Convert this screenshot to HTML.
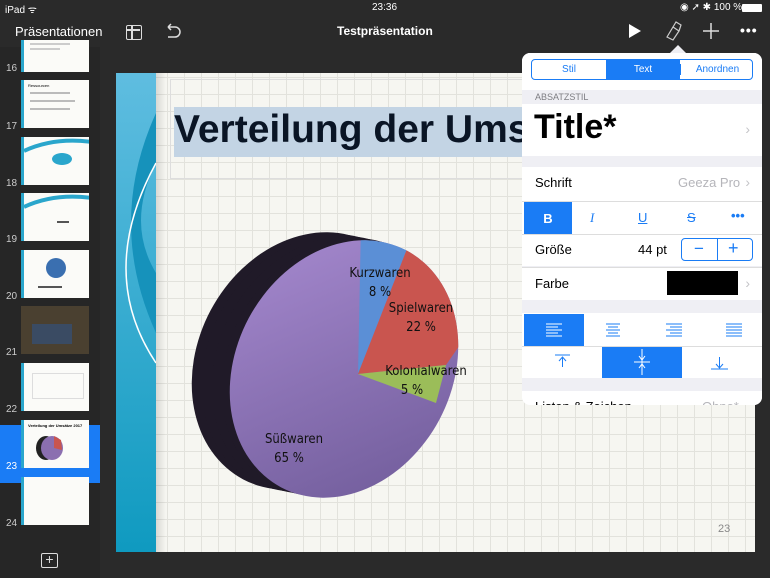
<!DOCTYPE html>
<html><head><meta charset="utf-8"><style>
*{margin:0;padding:0;box-sizing:border-box}
body{width:770px;height:578px;overflow:hidden;background:#2a2a2a;font-family:"Liberation Sans",sans-serif;position:relative}
.abs{position:absolute}
.status{top:0;left:0;width:770px;height:16px;color:#fff;font-size:10px}
.tb{color:#fff;font-size:13px}
.side{left:0;top:47px;width:100px;height:531px;background:#262626}
.th{position:absolute;left:21px;width:68px;height:48px;background:#fbfbf8;border-left:3px solid #2aa6cc;overflow:hidden}
.num{position:absolute;left:6px;color:#ccc;font-size:10px}
.slide{left:116px;top:73px;width:639px;height:479px;background-color:#f6f6f1;
background-image:linear-gradient(#e2e2dc 1px,transparent 1px),linear-gradient(90deg,#e2e2dc 1px,transparent 1px);background-size:17px 17px;background-position:0 4px}
.pop{left:522px;top:53px;width:240px;height:352px;background:#efeff4;border-radius:8px;overflow:hidden;font-size:13px;color:#000}
.row{position:absolute;left:0;width:240px;background:#fff}
.blue{color:#1a7cf5}
.chev{position:absolute;right:12px;color:#c4c4c8;font-size:14px}
</style></head><body>
<div class="abs status"><span class="abs" style="left:5px;top:2px">iPad ᯤ</span><span class="abs" style="left:372px;top:2px">23:36</span><span class="abs" style="left:680px;top:2px">◉ ➚ ✱ 100 %</span><span class="abs" style="left:742px;top:4px;width:20px;height:8px;background:#fff;border-radius:1px"></span></div>
<div class="abs tb" style="left:15px;top:24px">Präsentationen</div>
<div class="abs" style="left:126px;top:25px;width:16px;height:15px;border:1.5px solid #ddd;border-radius:2px"><div style="position:absolute;left:4px;top:0;width:1.5px;height:13px;background:#ddd"></div><div style="position:absolute;left:0;top:3px;width:13px;height:1.5px;background:#ddd"></div></div>
<svg class="abs" style="left:163px;top:23px" width="20" height="18"><path d="M5 4 H12 A5 5 0 0 1 12 14 H5 M5 4 L8 1 M5 4 L8 7" fill="none" stroke="#ddd" stroke-width="1.5"/></svg>
<div class="abs tb" style="left:337px;top:24px;font-weight:bold;font-size:12px">Testpräsentation</div>
<svg class="abs" style="left:628px;top:23px" width="14" height="16"><path d="M1 1 L13 8 L1 15Z" fill="#fff"/></svg>
<svg class="abs" style="left:664px;top:20px" width="20" height="22"><path d="M3 17 L9 7 L15 11 L9 20Z M9 7 L12 2 L17 5 L15 11" fill="none" stroke="#ccc" stroke-width="1.2"/></svg>
<svg class="abs" style="left:703px;top:23px" width="16" height="16"><path d="M8 0V16M0 8H16" stroke="#ddd" stroke-width="1.5"/></svg>
<div class="abs" style="left:740px;top:22px;color:#fff;font-size:14px;font-weight:bold;letter-spacing:1px">•••</div>

<div class="abs side">
<div class="abs" style="left:0;top:378px;width:100px;height:58px;background:#1a7cf5"></div>
</div>
<div class="th" style="top:40px;height:32px"><div style="margin:3px 6px;height:2px;width:40px;background:#ccc"></div><div style="margin:3px 6px;height:2px;width:30px;background:#ccc"></div></div><div class="num" style="top:63px">16</div>
<div class="th" style="top:80px"><div style="font-size:4px;margin:3px 4px">Ressourcen</div><div style="margin:4px 6px;height:2px;width:40px;background:#bbb"></div><div style="margin:6px 6px;height:2px;width:45px;background:#bbb"></div><div style="margin:6px 6px;height:2px;width:40px;background:#bbb"></div></div><div class="num" style="top:121px">17</div>
<div class="th" style="top:137px"><svg width="68" height="48"><path d="M0 14 Q30 0 68 5" stroke="#2aa6cc" stroke-width="4" fill="none"/><ellipse cx="38" cy="22" rx="10" ry="6" fill="#2aa6cc"/></svg></div><div class="num" style="top:178px">18</div>
<div class="th" style="top:193px"><svg width="68" height="48"><path d="M0 14 Q30 0 68 5" stroke="#2aa6cc" stroke-width="4" fill="none"/><rect x="33" y="28" width="12" height="2" fill="#555"/></svg></div><div class="num" style="top:234px">19</div>
<div class="th" style="top:250px"><svg width="68" height="48"><circle cx="32" cy="18" r="10" fill="#3a6fb0"/><rect x="14" y="36" width="24" height="2" fill="#555"/></svg></div><div class="num" style="top:291px">20</div>
<div class="th" style="top:306px;background:#4a4030;border-left-color:#4a4030"><div style="margin:18px 8px;height:20px;width:40px;background:#3a4b63"></div></div><div class="num" style="top:347px">21</div>
<div class="th" style="top:363px"><div style="margin:10px 8px;height:26px;width:52px;border:1px solid #ddd"></div></div><div class="num" style="top:404px">22</div>
<div class="th" style="top:420px"><div style="font-size:4px;font-weight:bold;margin:3px 4px">Verteilung der Umsätze 2017</div><svg width="68" height="40" style="position:absolute;top:8px;left:0"><ellipse cx="22" cy="20" rx="10" ry="12" fill="#222"/><ellipse cx="28" cy="20" rx="11" ry="12" fill="#8b6fb0"/><path d="M30 20 L30 8 L37 12 L38 22Z" fill="#c9554f"/></svg></div><div class="num" style="top:461px;color:#fff">23</div>
<div class="th" style="top:477px"></div><div class="num" style="top:518px">24</div>
<div class="abs" style="left:41px;top:553px;width:17px;height:15px;border:1.5px solid #ddd;border-radius:2px;color:#ddd;font-size:14px;line-height:11px;text-align:center">+</div>

<div class="abs slide">
<svg class="abs" style="left:0;top:0" width="40" height="479"><defs><linearGradient id="g" x1="0" y1="0" x2="0" y2="1"><stop offset="0" stop-color="#5fbde0"/><stop offset="1" stop-color="#0f9ac0"/></linearGradient></defs><rect width="40" height="479" fill="url(#g)"/><path d="M40 40 Q-10 150 40 260 L40 200 Q10 150 40 90Z" fill="#1692bb"/><path d="M40 90 Q-20 200 40 290" stroke="#fff" stroke-width="1.5" fill="none"/></svg>
<div class="abs" style="left:40px;top:0;width:10px;height:479px;background:linear-gradient(90deg,rgba(0,0,0,.12),transparent)"></div>
<div class="abs" style="left:54px;top:6px;width:420px;height:100px;border:1px solid #ddd"></div>
<div class="abs" style="left:58px;top:34px;width:410px;height:50px;background:#c3d4e4"></div>
<div class="abs" style="left:58px;top:35px;font-size:39px;font-weight:bold;color:#0a1525;white-space:nowrap">Verteilung der Ums</div>
<svg class="abs" style="left:0;top:0" width="420" height="479">
<defs><clipPath id="face"><ellipse cx="228" cy="296" rx="108" ry="134" transform="rotate(28 228 296)"/></clipPath>
<linearGradient id="pg" x1="0" y1="0" x2="1" y2="1"><stop offset="0" stop-color="#a78ad0"/><stop offset="1" stop-color="#6e5a98"/></linearGradient></defs>
<g fill="#201a28">
<ellipse cx="190" cy="288" rx="108" ry="134" transform="rotate(28 190 288)"/>
<ellipse cx="200" cy="290" rx="108" ry="134" transform="rotate(28 200 290)"/>
<ellipse cx="210" cy="292" rx="108" ry="134" transform="rotate(28 210 292)"/>
<ellipse cx="220" cy="294" rx="108" ry="134" transform="rotate(28 220 294)"/>
</g>
<ellipse cx="228" cy="296" rx="108" ry="134" transform="rotate(28 228 296)" fill="url(#pg)"/>
<g clip-path="url(#face)">
<path d="M242 301 L245 150 L298 158Z" fill="#5b8fd6"/>
<path d="M242 301 L298 158 L380 220 L330 292Z" fill="#c9554f"/>
<path d="M242 301 L330 292 L320 330Z" fill="#9bbd59"/>
</g>
<g font-family="DejaVu Sans,sans-serif" font-size="13" fill="#111" text-anchor="middle" font-stretch="condensed">
<text x="264" y="204">Kurzwaren</text><text x="264" y="223">8 %</text>
<text x="305" y="239">Spielwaren</text><text x="305" y="258">22 %</text>
<text x="310" y="302">Kolonialwaren</text><text x="296" y="321">5 %</text>
<text x="178" y="370">Süßwaren</text><text x="173" y="389">65 %</text>
</g></svg>
<div class="abs" style="left:602px;top:450px;font-size:11px;color:#888">23</div>
</div>

<svg class="abs" style="left:669px;top:45px" width="18" height="9"><path d="M0 9 L9 0 L18 9Z" fill="#efeff4"/></svg>
<div class="abs pop">
<div class="row" style="top:0;height:37px;background:#fff"></div>
<div class="abs" style="left:9px;top:6px;width:222px;height:21px;border:1px solid #1a7cf5;border-radius:4px;overflow:hidden;font-size:10px">
<div class="abs blue" style="left:0;width:74px;top:4px;text-align:center">Stil</div>
<div class="abs" style="left:74px;width:74px;height:21px;background:#1a7cf5;color:#fff;text-align:center;padding-top:4px">Text</div>
<div class="abs blue" style="left:148px;width:74px;top:4px;text-align:center;border-left:1px solid #1a7cf5">Anordnen</div></div>
<div class="abs" style="left:13px;top:39px;font-size:9px;color:#7d7d82">ABSATZSTIL</div>
<div class="row" style="top:51px;height:52px"><div class="abs" style="left:12px;top:4px;font-size:34px;font-weight:bold">Title*</div><div class="chev" style="top:17px">›</div></div>
<div class="row" style="top:114px;height:99px"></div>
<div class="abs" style="left:13px;top:122px">Schrift</div><div class="abs" style="left:156px;top:122px;color:#b5b5ba">Geeza Pro</div><div class="chev" style="top:121px">›</div>
<div class="abs" style="left:0;top:148px;width:240px;height:1px;background:#ddd"></div>
<div class="abs" style="left:2px;top:149px;width:48px;height:32px;background:#1a7cf5;color:#fff;font-weight:bold;text-align:center;padding-top:9px">B</div>
<div class="abs blue" style="left:68px;top:157px;font-style:italic;font-family:'Liberation Serif',serif">I</div>
<div class="abs blue" style="left:116px;top:157px;text-decoration:underline">U</div>
<div class="abs blue" style="left:165px;top:157px;text-decoration:line-through">S</div>
<div class="abs blue" style="left:209px;top:155px;font-weight:bold">•••</div>
<div class="abs" style="left:0;top:181px;width:240px;height:1px;background:#ddd"></div>
<div class="abs" style="left:13px;top:189px">Größe</div><div class="abs" style="left:116px;top:189px">44 pt</div>
<div class="abs" style="left:159px;top:185px;width:72px;height:23px;border:1px solid #1a7cf5;border-radius:4px"><div class="abs" style="left:35px;top:0;width:1px;height:21px;background:#1a7cf5"></div><div class="abs blue" style="left:12px;top:0;font-size:17px">−</div><div class="abs blue" style="left:46px;top:-1px;font-size:18px">+</div></div>
<div class="abs" style="left:0;top:214px;width:240px;height:1px;background:#ddd"></div>
<div class="row" style="top:215px;height:32px"></div>
<div class="abs" style="left:13px;top:223px">Farbe</div><div class="abs" style="left:145px;top:218px;width:71px;height:24px;background:#000"></div><div class="chev" style="top:222px">›</div>
<div class="row" style="top:260px;height:65px"></div>
<div class="abs" style="left:2px;top:261px;width:60px;height:32px;background:#1a7cf5"></div>
<svg class="abs" style="left:0;top:261px" width="240" height="65" stroke-width="1">
<g stroke="#fff"><path d="M24 10H40M24 13H36M24 16H40M24 19H36M24 22H40"/></g>
<g stroke="#1a7cf5"><path d="M84 10H98M86 13H96M84 16H98M86 19H96M84 22H98"/>
<path d="M144 10H160M148 13H160M144 16H160M148 19H160M144 22H160"/>
<path d="M204 10H220M204 13H220M204 16H220M204 19H220M204 22H220"/>
<path d="M33 41H48M40.5 44V53M37 47L40.5 43L44 47" fill="none"/>
<path d="M189 55H206M197.5 43V53M194 50L197.5 54L201 50" fill="none"/></g>
</svg>
<div class="abs" style="left:80px;top:293px;width:80px;height:32px;background:#1a7cf5"></div>
<svg class="abs" style="left:80px;top:293px" width="80" height="32"><path d="M32 16H48M40 3V29M37 10L40 14L43 10M37 22L40 18L43 22" stroke="#fff" fill="none"/></svg>
<div class="abs" style="left:0;top:293px;width:240px;height:1px;background:#ddd"></div>
<div class="row" style="top:338px;height:20px"></div>
<div class="abs" style="left:13px;top:346px">Listen &amp; Zeichen</div><div class="abs" style="left:180px;top:346px;color:#b5b5ba">Ohne*</div>
</div>
</body></html>
